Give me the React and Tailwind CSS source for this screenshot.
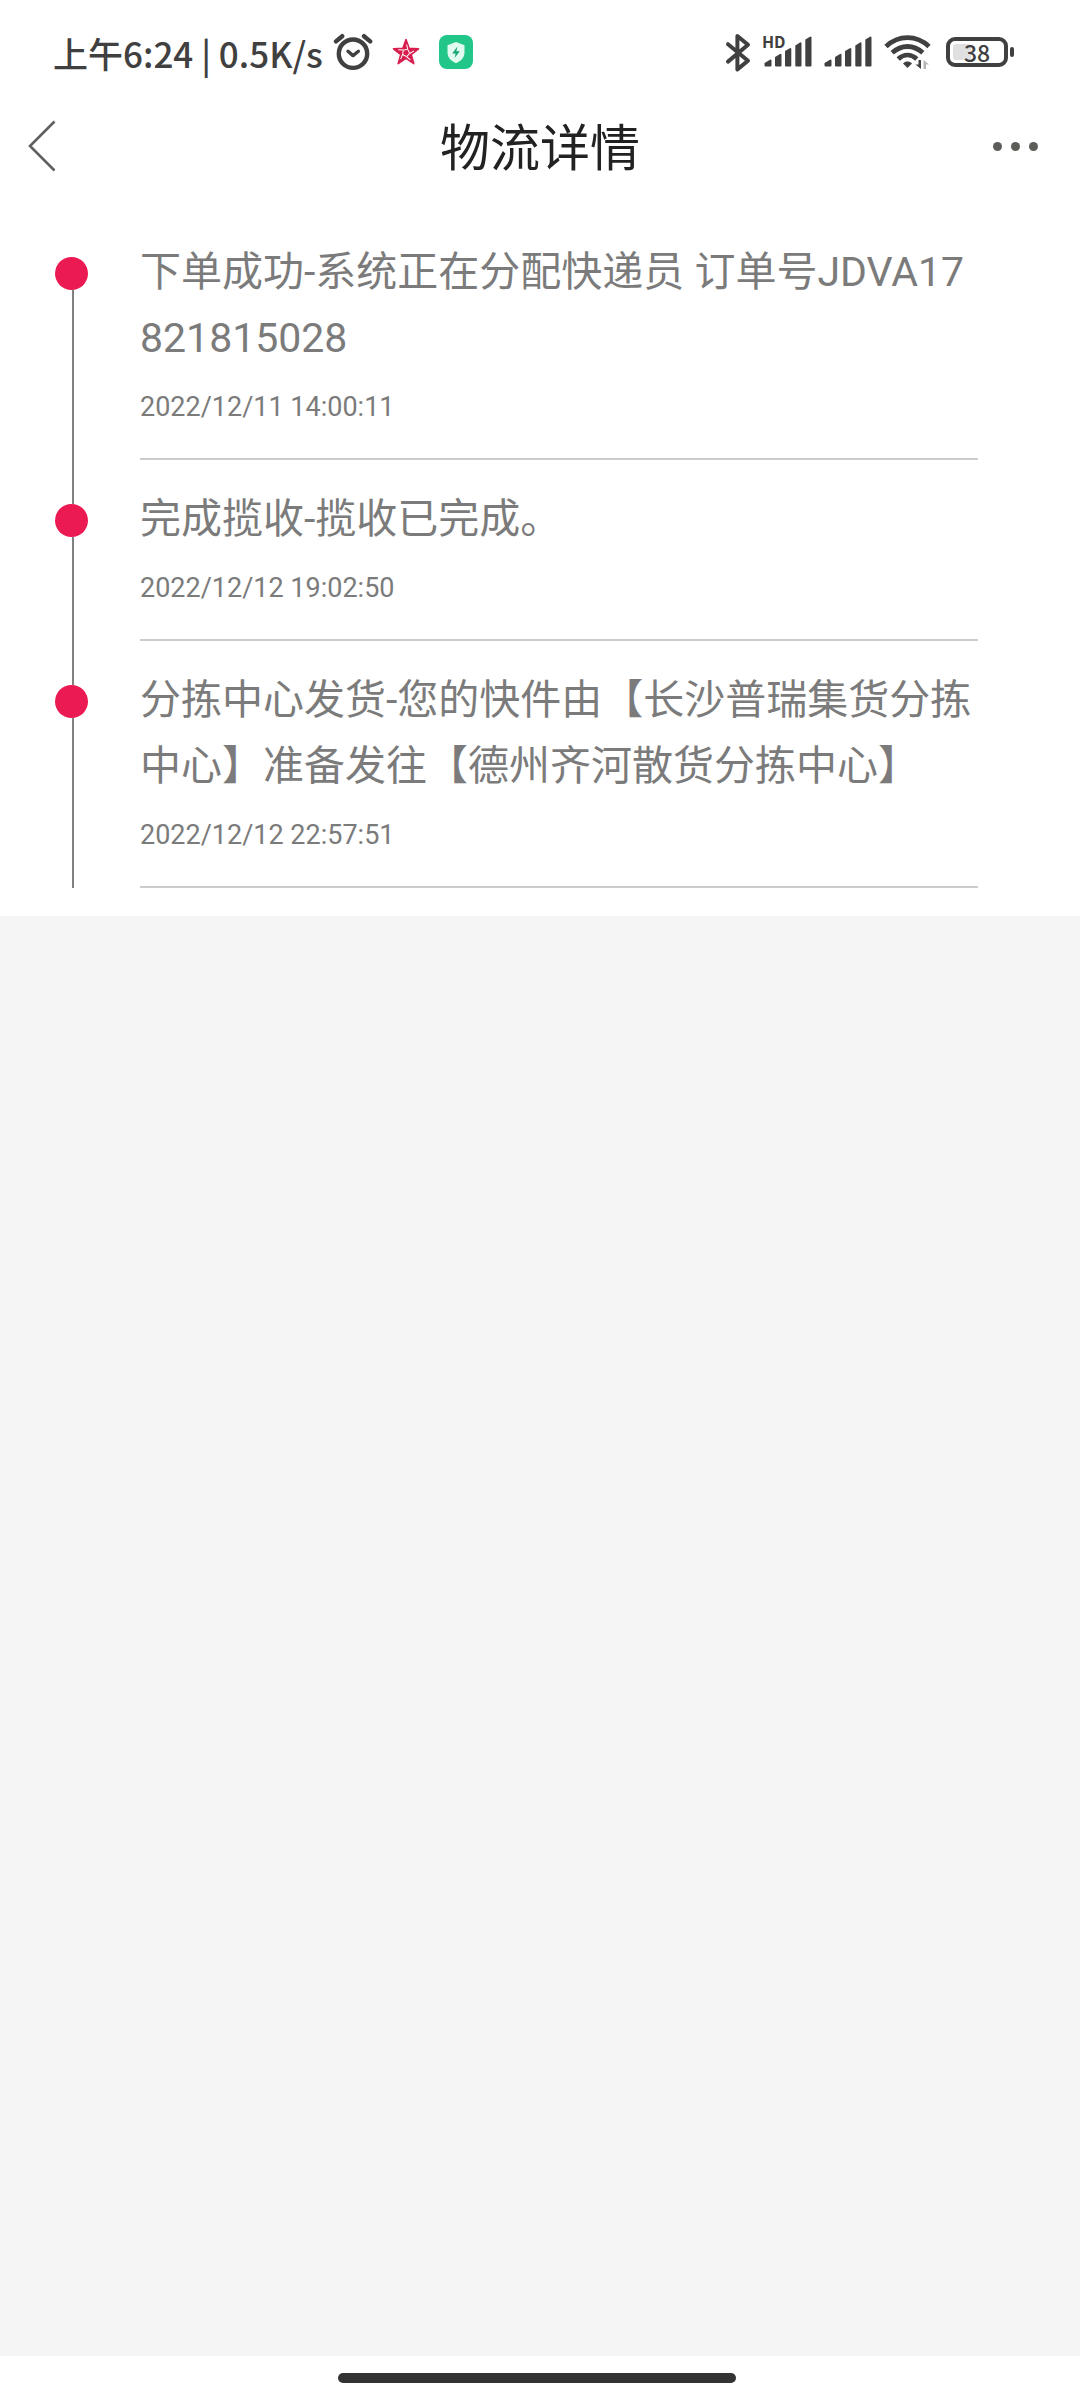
const records = [
  { id: 1, text: "下单成功-系统正在分配快递员 订单号JDVA17821815028", time: "2022/12/11 14:00:11" },
  { id: 2, text: "完成揽收-揽收已完成。", time: "2022/12/12 19:02:50" },
  {
    id: 3,
    text: "分拣中心发货-您的快件由【长沙普瑞集货分拣中心】准备发往【德州齐河散货分拣中心】",
    time: "2022/12/12 22:57:51",
  },
];

function AlarmIcon() {
  return (
    <svg width="40" height="38" viewBox="0 0 40 38" fill="none" stroke="#404040" strokeWidth="4.4" strokeLinecap="round">
      <circle cx="20" cy="20.7" r="14.2" />
      <path d="M3 8.4L9.2 3.2M31 3.2L37.2 8.4" />
      <path d="M15 18.2L20 22.6L25.4 18.2" strokeWidth="3.4" strokeLinejoin="round" />
    </svg>
  );
}

function StarIcon() {
  return (
    <svg width="28" height="28" viewBox="0 0 28 28">
      <path
        d="M14 1.5L17.2 10.4L26.5 10.8L19.2 16.5L21.8 25.6L14 20.3L6.2 25.6L8.8 16.5L1.5 10.8L10.8 10.4Z"
        fill="#d81e4e"
        stroke="#d81e4e"
        strokeWidth="1.6"
        strokeLinejoin="round"
      />
      {[0, 72, 144, 216, 288].map((deg) => (
        <path
          key={deg}
          d="M12 12L15.8 11.4L14.6 6.5"
          transform={`rotate(${deg} 14 14.8)`}
          fill="none"
          stroke="#fff"
          strokeWidth="1"
        />
      ))}
    </svg>
  );
}

function ShieldIcon() {
  return (
    <svg width="34" height="34" viewBox="0 0 34 34">
      <rect width="34" height="34" rx="8" fill="#21c688" />
      <path d="M17 7L25.5 10.2V17.5C25.5 22.5 22 26 17 28.2C12 26 8.5 22.5 8.5 17.5V10.2Z" fill="#e2fbf1" />
      <path d="M18.4 11.5L13.2 18.4H16.6L15.6 23L20.8 16.2H17.4Z" fill="#17a673" />
    </svg>
  );
}

function BluetoothIcon() {
  return (
    <svg width="28" height="41" viewBox="0 0 28 41" fill="none" stroke="#404040" strokeWidth="4" strokeLinecap="round" strokeLinejoin="round">
      <path d="M4 12.2L24 28.8L13.4 37.4V4L24 12.8L4 29.6" />
    </svg>
  );
}

function SignalIcon() {
  return (
    <svg width="48" height="32" viewBox="0 0 48 32" fill="#404040" stroke="#404040" strokeWidth="2" strokeLinejoin="round">
      <path d="M1.5 29.5V27.5L6.5 24.5V29.5Z" />
      <path d="M12 29.5V21.5L16.5 18.8V29.5Z" />
      <path d="M22 29.5V15.5L26.3 13V29.5Z" />
      <path d="M32.3 29.5V10L36.5 7.4V29.5Z" />
      <path d="M42.3 29.5V4.2L46.5 1.6V29.5Z" />
    </svg>
  );
}

function WifiIcon() {
  return (
    <svg width="48" height="36" viewBox="0 0 48 36" fill="none" stroke="#404040" strokeWidth="4.8">
      <path d="M2 12.4C14.5 0.6 32.5 0.6 45 12.4" />
      <path d="M8.2 18.8C17.5 10.4 29.5 10.4 38.8 18.8" />
      <path d="M14.2 25C20 19.8 27 19.8 32.8 25" />
      <path d="M23.5 34L19 29.4C21.8 27 25.2 27 28 29.4Z" fill="#404040" stroke="none" />
      <path d="M37 26V35L31.5 30.5H34.5V26Z" fill="#404040" stroke="none" />
      <path d="M39.5 35V26L45 30.5H42V35Z" fill="#b5b5b5" stroke="none" />
    </svg>
  );
}

function Battery() {
  return (
    <div className="ml-[2px] flex items-center gap-[2px]">
      <div className="relative flex h-[30px] w-[62px] items-center justify-center rounded-[9px] border-4 border-[#404040]">
        <div className="absolute left-[3px] top-[3px] h-4 w-[18px] rounded-[3px] bg-[#e0e0e0]" />
        <span className="relative text-[23px] leading-none font-medium">38</span>
      </div>
      <div className="h-[10px] w-1 rounded-full bg-[#404040]" />
    </div>
  );
}

function StatusBar() {
  return (
    <div className="flex h-[104px] items-center justify-between pl-[53px] pr-[66px] text-[#404040]">
      <div className="flex items-center">
        <span className="text-[35px] leading-none font-medium">上午6:24 | 0.5K/s</span>
        <div className="ml-[10px] flex items-center gap-[19px]">
          <AlarmIcon />
          <StarIcon />
          <ShieldIcon />
        </div>
      </div>
      <div className="flex items-center gap-3">
        <BluetoothIcon />
        <div className="relative">
          <span className="absolute -left-[2px] -top-[3px] text-[16px] leading-none font-bold">HD</span>
          <SignalIcon />
        </div>
        <SignalIcon />
        <WifiIcon />
        <Battery />
      </div>
    </div>
  );
}

function Header() {
  return (
    <header className="grid h-[84px] grid-cols-[1fr_auto_1fr] items-center px-[26px]">
      <button type="button" aria-label="返回" className="justify-self-start">
        <svg width="32" height="54" viewBox="0 0 32 54" fill="none" stroke="#606060" strokeWidth="2.6">
          <path d="M28.5 2.5L4 27L28.5 51.5" />
        </svg>
      </button>
      <h1 className="pb-1 text-[50px] leading-none text-[#222]">物流详情</h1>
      <button type="button" aria-label="更多" className="mr-4 flex gap-[9px] justify-self-end">
        <span className="size-[9px] rounded-full bg-[#5c5c58]" />
        <span className="size-[9px] rounded-full bg-[#5c5c58]" />
        <span className="size-[9px] rounded-full bg-[#5c5c58]" />
      </button>
    </header>
  );
}

function Record({ text, time, first }) {
  return (
    <li className="flex pl-[55px] pr-[102px]">
      <div className="flex w-[85px] flex-col">
        <div className={first ? "h-11" : "ml-[17px] h-11 w-[2px] bg-[#808080]"} />
        <div className="size-[33px] rounded-full bg-[#ec1a52]" />
        <div className="ml-[17px] w-[2px] flex-1 bg-[#808080]" />
      </div>
      <div className="min-w-0 flex-1 border-b-2 border-[#ccc] pt-[26px] pb-[31px] text-[#7b7b7b]">
        <p className="text-[41px] leading-[66px] break-all">{text}</p>
        <time className="mt-4 block text-[27px] leading-[40px]">{time}</time>
      </div>
    </li>
  );
}

export default function App() {
  return (
    <div className="flex min-h-screen flex-col bg-[#f5f5f5] font-['Noto_Sans_CJK_SC',sans-serif]">
      <div className="bg-white">
        <StatusBar />
        <Header />
      </div>

      <main className="flex-1">
        <ul className="bg-white pt-[25px] pb-7 font-[Roboto,'Noto_Sans_CJK_SC',sans-serif]">
          {records.map((r, i) => (
            <Record key={r.id} text={r.text} time={r.time} first={i === 0} />
          ))}
        </ul>
      </main>

      {/* gesture bar */}
      <div className="flex h-11 justify-center bg-white pt-[17px] pr-[6px]">
        <div className="h-[10px] w-[37%] rounded-full bg-[#333]" />
      </div>
    </div>
  );
}
